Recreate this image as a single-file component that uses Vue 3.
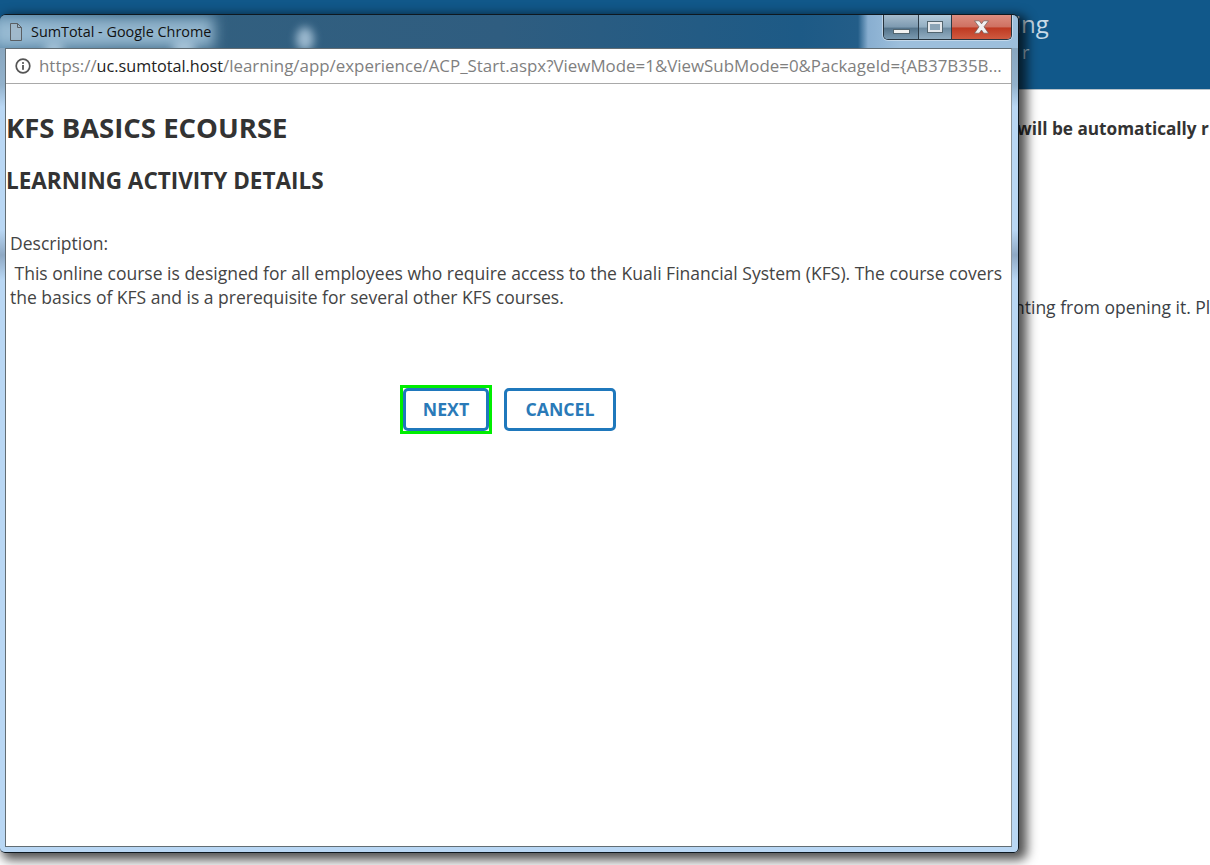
<template>
  <div class="page">
    <header class="site-header">
      <div class="site-title">ing</div>
      <div class="site-sub">r</div>
    </header>
    <main class="site-main">
      <p class="notice">will be automatically r</p>
      <p class="hint">nting from opening it. Pl</p>
    </main>

    <section class="window">
      <div class="titlebar">
        <span class="glow"></span>
        <span class="spot spot-a"></span>
        <span class="spot spot-b"></span>
        <span class="spot spot-c"></span>
        <svg class="page-icon" width="14" height="18" viewBox="0 0 14 18">
          <path d="M1.500 .5h7l4 4v13h-11z" fill="#a9b9c6" fill-opacity=".55" stroke="#5a5f63" />
          <path d="M8.500 .5v4h4" fill="none" stroke="#5a5f63" />
        </svg>
        <span class="win-title">SumTotal - Google Chrome</span>
        <div class="caption">
          <button class="cap cap-min"><i></i></button>
          <button class="cap cap-max"><i></i></button>
          <button class="cap cap-close">
            <svg width="17" height="14" viewBox="0 0 17 14">
              <path d="M1.500 .8h4.800l2.200 3 2.200-3h4.800l-4.500 6 4.500 6.400h-4.800l-2.200-3.200-2.200 3.200H1.500L6 6.800z" fill="#f1f1f1" stroke="#6e5a55" stroke-width=".7" />
            </svg>
          </button>
        </div>
      </div>

      <div class="inner">
        <div class="addressbar">
          <svg class="info" width="16" height="16" viewBox="0 0 16 16">
            <circle cx="8" cy="8" r="6.800" fill="none" stroke="#555" stroke-width="1.700" />
            <rect x="7.100" y="7" width="1.800" height="4.800" fill="#555" />
            <rect x="7.100" y="4.100" width="1.800" height="1.800" fill="#555" />
          </svg>
          <span class="url">https://<b>uc.sumtotal.host</b>/learning/app/experience/ACP_Start.aspx?ViewMode=1&amp;ViewSubMode=0&amp;PackageId={AB37B35B...</span>
        </div>
        <div class="content">
          <h1>KFS BASICS ECOURSE</h1>
          <h2>LEARNING ACTIVITY DETAILS</h2>
          <div class="desc">
            <p class="desc-label">Description:</p>
            <p class="desc-body">&nbsp;This online course is designed for all employees who require access to the Kuali Financial System (KFS). The course covers the basics of KFS and is a prerequisite for several other KFS courses.</p>
          </div>
          <div class="actions">
            <span class="focus-ring"><button class="btn btn-next">NEXT</button></span>
            <button class="btn btn-cancel">CANCEL</button>
          </div>
        </div>
      </div>
    </section>
  </div>
</template>

<script setup>
</script>

<style>
html, body { background: #fff; overflow: hidden; }
</style>

<style scoped>
.page { position: relative; width: 1210px; height: 865px; overflow: hidden; background: #fff; font-family: "Open Sans", "Noto Sans", sans-serif; color: #333; }

.site-header { height: 90px; box-sizing: border-box; background: #11588a; border-bottom: 1px solid #b9c4cc; padding: 7px 0 0 1015px; color: #c9dbe8; }
.site-title { font-size: 24px; line-height: 33px; }
.site-sub { font-size: 18px; line-height: 24px; padding-left: 7px; color: #a9c4d8; }

.site-main { white-space: nowrap; overflow: hidden; }
.notice { margin: 27px 0 0 1017px; font-size: 17.200px; line-height: 24px; font-weight: 700; color: #333; }
.hint { margin: 154px 0 0 1014px; font-size: 17.500px; line-height: 24px; color: #3b3f46; }

.window { position: absolute; left: 0; top: 14px; width: 1019px; height: 839px; box-sizing: border-box; display: flex; flex-direction: column; padding: 0 6px 5px 5px; background: linear-gradient(#7f9cb4 0, #93b2cc 70px, #b9d7f4 92px, #b9d7f4 215px, #8fa9c4 240px, #b9d7f4 265px); border: 1px solid #0e1820; border-left: 0; border-radius: 6px 6px 5px 5px; box-shadow: 5px 4px 11px 3px rgba(0, 0, 0, .68); }

.titlebar { position: relative; height: 33px; flex: none; margin: 0 -6px 0 -5px; border-radius: 6px 6px 0 0; overflow: hidden; background: linear-gradient(90deg, #4d7d9f 0, #33607f 120px, #2f5d80 500px, #1d5a86 800px, #235d88 858px, #88aed0 868px, #9dbfdc 900px, #9dbfdc 1019px); }
.glow { position: absolute; left: -8px; top: 2px; width: 222px; height: 31px; background: rgba(165, 197, 220, .85); filter: blur(7px); }
.spot { position: absolute; background: rgba(200, 222, 240, .7); filter: blur(4px); border-radius: 50%; }
.spot-a { left: 296px; top: 12px; width: 18px; height: 24px; }
.spot-b { left: 172px; top: 26px; width: 24px; height: 14px; }
.spot-c { left: 44px; top: 28px; width: 20px; height: 12px; }
.page-icon { position: absolute; left: 9px; top: 8px; }
.win-title { position: absolute; left: 31px; top: 7px; font-size: 14.400px; line-height: 20px; color: #111; white-space: nowrap; }

.caption { position: absolute; right: 6px; top: 0; display: flex; height: 24px; border: 1px solid #27343e; border-top: 0; border-radius: 0 0 5px 5px; overflow: hidden; box-shadow: 0 0 0 1px rgba(255, 255, 255, .4); }
.cap { padding: 0; border: 0; border-right: 1px solid #2b3a46; display: flex; align-items: center; justify-content: center; }
.cap-min { width: 35px; background: linear-gradient(#a6bccd, #7d9ab0 50%, #54738a 55%, #7a99b0); }
.cap-min i { width: 15px; height: 3px; margin-top: 9px; background: #f2f2f2; border: 1px solid #52656f; }
.cap-max { width: 33px; background: linear-gradient(#b5cbdb, #92aec2 50%, #6c8aa0 55%, #92aec2); }
.cap-max i { width: 10px; height: 6px; border: 2px solid #e4e8ec; outline: 1px solid #52656f; background: #8ba4b6; }
.cap-close { width: 59px; border-right: 0; background: linear-gradient(#dd8d80, #cf7262 48%, #bf3a22 55%, #cf5a40); }

.inner { flex: 1; min-height: 0; display: flex; flex-direction: column; background: #fff; border: 1px solid #626d74; border-right-color: #8c959b; }
.addressbar { height: 35px; flex: none; display: flex; align-items: center; gap: 8px; padding-left: 9px; border-bottom: 1px solid #a9a9a9; box-sizing: border-box; }
.info { flex: none; }
.url { font-size: 16.900px; line-height: 24px; color: #7f7f7f; white-space: nowrap; }
.url b { font-size: 16.200px; font-weight: 400; color: #222; }

.content { flex: 1; }
h1 { margin: 25px 0 0; font-size: 27.500px; line-height: 37px; font-weight: 700; color: #333; }
h2 { margin: 20px 0 0; font-size: 22.500px; line-height: 30px; font-weight: 700; color: #333; }
.desc { margin: 35px 0 0 4px; font-size: 17.520px; line-height: 24px; color: #444; }
.desc-label { margin: 0 0 6px; }
.desc-body { margin: 0; }

.actions { display: flex; gap: 12px; margin: 76px 0 0 394px; align-items: center; }
.focus-ring { display: block; border: 3px solid #00ee00; }
.btn { display: block; height: 43px; padding: 0 0 2px; font-family: inherit; font-size: 17.700px; font-weight: 700; color: #2a7ab8; background: #fff; border: 3px solid #1f78bc; border-radius: 5px; }
.btn-next { width: 86px; }
.btn-cancel { width: 112px; }
</style>
